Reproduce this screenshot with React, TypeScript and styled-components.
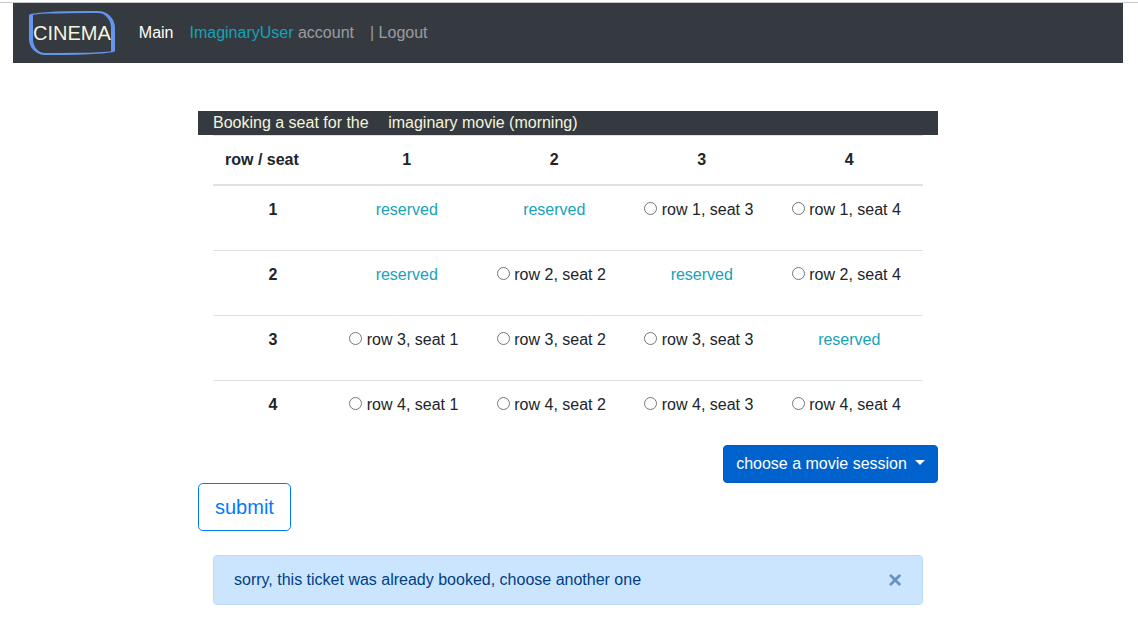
import React from "react";
import styled, { createGlobalStyle } from "styled-components";

const GlobalStyle = createGlobalStyle`
  *, *::before, *::after { box-sizing: border-box; }
  body {
    margin: 0;
    background: #fff;
    color: #212529;
    font: 400 16px/1.5 "Liberation Sans", Arial, sans-serif;
  }
`;

const Page = styled.div`
  padding-top: 2px;
`;

const TopRule = styled.div`
  height: 1px;
  background: #c9c9cb;
`;

const Navbar = styled.nav`
  display: flex;
  align-items: center;
  width: 1110px;
  height: 60px;
  margin-left: 13px;
  padding: 8px 16px;
  background: #343a40;
`;

const Brand = styled.a`
  margin-right: 16px;
  padding: 5px 0;
  border: solid cornflowerblue;
  border-width: 2px 4px;
  border-radius: 60px 17px 60px 16px / 4px 17px 4px 16px;
  color: beige;
  font-size: 20px;
  line-height: 30px;
  white-space: nowrap;
`;

const NavLink = styled.a<{ $active?: boolean }>`
  padding: 8px;
  color: ${(p) => (p.$active ? "#fff" : "rgba(255, 255, 255, 0.5)")};
  white-space: nowrap;
`;

const UserName = styled.span`
  color: #17a2b8;
`;

const Booking = styled.main`
  display: flex;
  flex-direction: column;
  width: 740px;
  margin: 48px 0 0 198px;
`;

const Title = styled.header`
  display: flex;
  gap: 19.5px;
  height: 24px;
  padding: 0 15px;
  background: #343a40;
  color: beige;
`;

const SeatTable = styled.table`
  width: 710px;
  margin: 0 15px;
  table-layout: fixed;
  border-collapse: separate;
  border-spacing: 0;
`;

const HeadCell = styled.th<{ $label?: boolean }>`
  width: ${(p) => (p.$label ? "120px" : "auto")};
  height: 51px;
  padding: 12px;
  border-top: 1px solid #dee2e6;
  border-bottom: 2px solid #dee2e6;
  text-align: ${(p) => (p.$label ? "left" : "center")};
  vertical-align: top;
`;

const Row = styled.tr`
  height: 64px;

  & + & {
    height: 65px;
  }

  & + & > * {
    border-top: 1px solid #dee2e6;
  }
`;

const RowHead = styled.th`
  padding: 12px;
  text-align: center;
  vertical-align: top;
`;

const Cell = styled.td`
  padding: 12px 0;
  text-align: center;
  vertical-align: top;
  white-space: nowrap;
`;

const Reserved = styled.span`
  color: #17a2b8;
`;

const SeatLabel = styled.label`
  margin-right: 5.9px;
`;

const Radio = styled.input`
  width: 13px;
  height: 13px;
  margin: 0 4.5px 0 0;
`;

const Button = styled.button<{ $primary?: boolean }>`
  align-self: ${(p) => (p.$primary ? "flex-end" : "flex-start")};
  padding: ${(p) => (p.$primary ? "6px 12px" : "8px 16px")};
  border: 1px solid ${(p) => (p.$primary ? "#005cbf" : "#007bff")};
  border-radius: ${(p) => (p.$primary ? "4px" : "4.8px")};
  background: ${(p) => (p.$primary ? "#0062cc" : "#fff")};
  color: ${(p) => (p.$primary ? "#fff" : "#007bff")};
  font-family: inherit;
  font-size: ${(p) => (p.$primary ? "16px" : "20px")};
  line-height: ${(p) => (p.$primary ? "24px" : "30px")};
`;

const Caret = styled.span`
  display: inline-block;
  margin-left: 8.1px;
  vertical-align: 4px;
  border-top: 5px solid;
  border-right: 5px solid transparent;
  border-left: 5px solid transparent;
`;

const Alert = styled.div`
  display: flex;
  align-items: center;
  justify-content: space-between;
  height: 50px;
  margin: 24px 15px 0;
  padding: 0 20px;
  border: 1px solid #b8daff;
  border-radius: 4px;
  background: #cce5ff;
  color: #004085;
`;

const Close = styled.button`
  padding: 0;
  border: 0;
  background: none;
  color: #004085;
  font: 700 24px/24px "Liberation Sans", Arial, sans-serif;
  opacity: 0.5;
`;

const SEATS = [1, 2, 3, 4];
const RESERVED = new Set(["1-1", "1-2", "2-1", "2-3", "3-4"]);

export default function App() {
  return (
    <Page>
      <GlobalStyle />
      <TopRule />
      <Navbar>
        <Brand>CINEMA</Brand>
        <NavLink $active>Main</NavLink>
        <NavLink>
          <UserName>ImaginaryUser</UserName> account
        </NavLink>
        <NavLink>| Logout</NavLink>
      </Navbar>
      <Booking>
        <Title>
          <span>Booking a seat for the</span>
          <span>imaginary movie (morning)</span>
        </Title>
        <SeatTable>
          <thead>
            <tr>
              <HeadCell $label>row / seat</HeadCell>
              {SEATS.map((seat) => (
                <HeadCell key={seat}>{seat}</HeadCell>
              ))}
            </tr>
          </thead>
          <tbody>
            {SEATS.map((row) => (
              <Row key={row}>
                <RowHead>{row}</RowHead>
                {SEATS.map((seat) => (
                  <Cell key={seat}>
                    {RESERVED.has(`${row}-${seat}`) ? (
                      <Reserved>reserved</Reserved>
                    ) : (
                      <SeatLabel>
                        <Radio type="radio" name="seat" />
                        {`row ${row}, seat ${seat}`}
                      </SeatLabel>
                    )}
                  </Cell>
                ))}
              </Row>
            ))}
          </tbody>
        </SeatTable>
        <Button $primary>
          choose a movie session
          <Caret />
        </Button>
        <Button>submit</Button>
        <Alert>
          <span>sorry, this ticket was already booked, choose another one</span>
          <Close aria-label="Close">×</Close>
        </Alert>
      </Booking>
    </Page>
  );
}
